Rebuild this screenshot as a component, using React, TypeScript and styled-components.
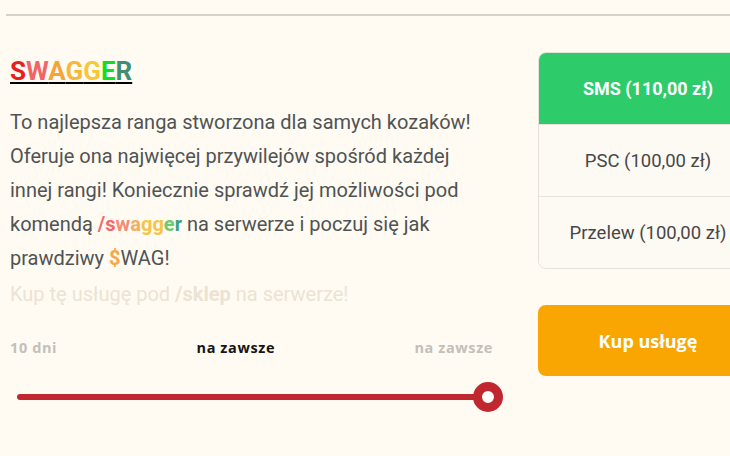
import React, { useState } from 'react';
import styled, { createGlobalStyle } from 'styled-components';

const GlobalStyle = createGlobalStyle`
    html, body {
        margin: 0;
        padding: 0;
        background: #fffbf3;
        overflow: hidden;
    }
    body {
        font-family: Roboto, "Liberation Sans", sans-serif;
    }
`;

const Page = styled.div`
    width: 780px;
    padding: 14px 0 0 6px;
`;

const Divider = styled.hr`
    margin: 0;
    border: none;
    border-top: 2px solid #d6d2ca;
`;

const Content = styled.div`
    display: flex;
    gap: 34px;
    padding: 36px 0 0 4px;
`;

const Info = styled.div`
    width: 494px;
    display: flex;
    flex-direction: column;
`;

const Title = styled.h2`
    margin: 4px 0 0 0;
    font-size: 26px;
    line-height: 30px;
    font-weight: 700;
    text-decoration: underline;
    text-decoration-thickness: 2px;
    text-underline-offset: 2px;
`;

const Letter = styled.span<{ $c: string }>`
    color: ${p => p.$c};
    text-decoration-color: ${p => p.$c};
`;

const Description = styled.p`
    max-width: 482px;
    margin: 19px 0 0 0;
    font-size: 20px;
    line-height: 34px;
    color: #4f5353;
`;

const Hint = styled.p`
    margin: 2px 0 0 0;
    font-size: 20px;
    line-height: 34px;
    color: #ece3d3;
`;

const Bold = styled.b<{ $c?: string }>`
    font-weight: 700;
    color: ${p => p.$c || 'inherit'};
`;

const Labels = styled.div`
    display: flex;
    justify-content: space-between;
    margin-top: 27px;
    padding-right: 11px;
    font-family: "Open Sans", sans-serif;
    font-weight: 700;
    font-size: 14.5px;
    line-height: 20px;
`;

const Label = styled.span<{ $active?: boolean }>`
    color: ${p => p.$active ? '#151515' : '#c3c0bb'};
    letter-spacing: 0.6px;
`;

const SliderRow = styled.div`
    margin-top: 24px;
    height: 30px;
    display: flex;
    align-items: center;
    padding: 0 1px 0 7px;
`;

const Track = styled.div`
    flex: 1;
    height: 6px;
    border-radius: 3px;
    background: #c1272f;
    margin-right: -14px;
`;

const Thumb = styled.div`
    width: 12px;
    height: 12px;
    border-radius: 50%;
    background: #fff;
    border: 9px solid #c1272f;
    flex-shrink: 0;
    position: relative;
`;

const Side = styled.div`
    width: 220px;
    display: flex;
    flex-direction: column;
    gap: 36px;
`;

const Methods = styled.div`
    border: 1px solid #e6e2da;
    border-radius: 8px;
    overflow: hidden;
`;

const Method = styled.div<{ $selected?: boolean }>`
    height: 71px;
    display: flex;
    align-items: center;
    justify-content: center;
    font-size: ${p => p.$selected ? '18px' : '18.5px'};
    font-weight: ${p => p.$selected ? 700 : 400};
    color: ${p => p.$selected ? '#fff' : '#474747'};
    background: ${p => p.$selected ? '#2ecb6b' : '#fdfaf4'};
    border-top: ${p => p.$selected ? 'none' : '1px solid #e6e2da'};
    cursor: pointer;
`;

const BuyButton = styled.button`
    height: 71px;
    border: none;
    border-radius: 8px;
    background: #f9a602;
    color: #fff;
    font-family: "Open Sans", sans-serif;
    font-weight: 700;
    font-size: 18px;
    cursor: pointer;
`;

const titleColors: [string, string][] = [
    ['S', '#e5211c'],
    ['W', '#f06565'],
    ['A', '#f3a43a'],
    ['G', '#f5b93a'],
    ['G', '#f5c93a'],
    ['E', '#10e020'],
    ['R', '#3e8f73'],
];

const commandColors: [string, string][] = [
    ['/s', '#f06a6a'],
    ['w', '#f38b76'],
    ['a', '#f5ad5a'],
    ['gg', '#f5c54a'],
    ['e', '#6acc6a'],
    ['r', '#3e9f7f'],
];

const methods = ['SMS (110,00 zł)', 'PSC (100,00 zł)', 'Przelew (100,00 zł)'];

const App: React.FC = () => {
    const [selected, setSelected] = useState(0);

    return (
        <Page>
            <GlobalStyle />
            <Divider />
            <Content>
                <Info>
                    <Title>
                        {titleColors.map(([l, c], i) => <Letter key={i} $c={c}>{l}</Letter>)}
                    </Title>
                    <Description>
                        To najlepsza ranga stworzona dla samych kozaków! Oferuje ona najwięcej przywilejów spośród każdej innej rangi! Koniecznie sprawdź jej możliwości pod komendą{' '}
                        {commandColors.map(([l, c], i) => <Bold key={i} $c={c}>{l}</Bold>)}
                        {' '}na serwerze i poczuj się jak prawdziwy <Bold $c="#f5a74a">$</Bold>WAG!
                    </Description>
                    <Hint>Kup tę usługę pod <Bold>/sklep</Bold> na serwerze!</Hint>
                    <Labels>
                        <Label>10 dni</Label>
                        <Label $active>na zawsze</Label>
                        <Label>na zawsze</Label>
                    </Labels>
                    <SliderRow>
                        <Track />
                        <Thumb />
                    </SliderRow>
                </Info>
                <Side>
                    <Methods>
                        {methods.map((m, i) => (
                            <Method key={m} $selected={selected === i} onClick={() => setSelected(i)}>{m}</Method>
                        ))}
                    </Methods>
                    <BuyButton>Kup usługę</BuyButton>
                </Side>
            </Content>
        </Page>
    );
};

export default App;
